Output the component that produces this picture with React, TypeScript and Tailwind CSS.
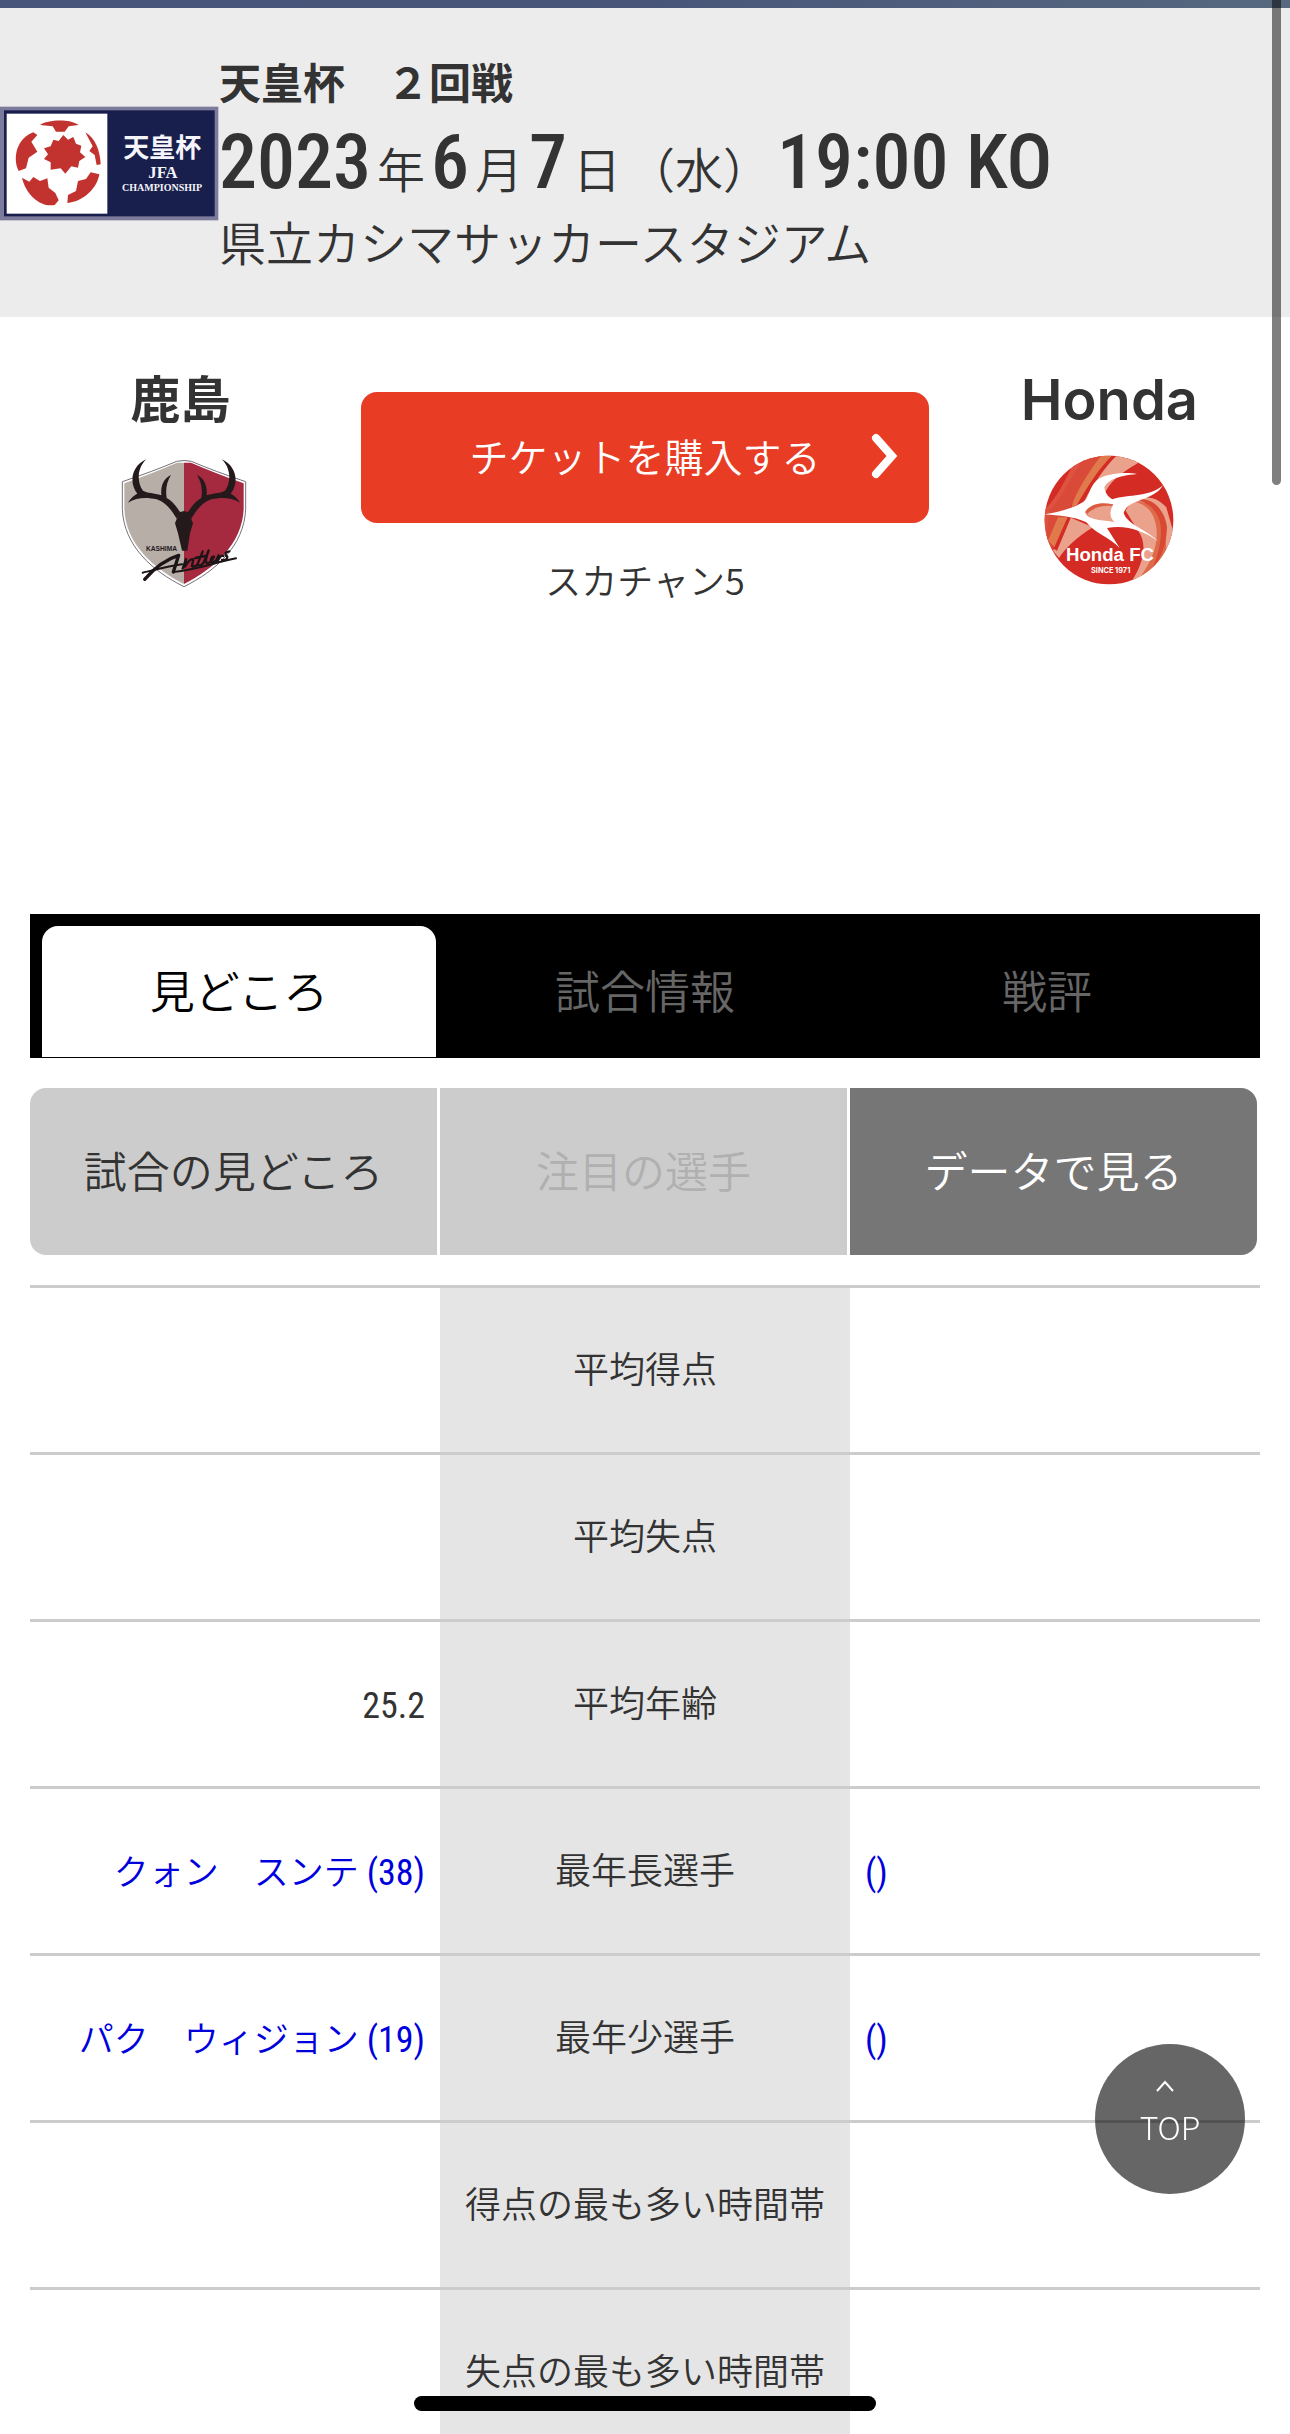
import type { ReactNode } from "react";

type Row = { label: string; home?: ReactNode; away?: ReactNode };

function Player({ name, age }: { name?: string; age?: string }) {
  return (
    <a href="#player" className="text-[#0000dc]">
      {name && <span className="mr-2 text-[35px] font-[350]">{name}</span>}
      <span className="font-['Roboto_Condensed','Roboto',sans-serif]">({age})</span>
    </a>
  );
}

const rows: Row[] = [
  { label: "平均得点" },
  { label: "平均失点" },
  {
    label: "平均年齢",
    home: <span className="font-['Roboto_Condensed','Roboto',sans-serif]">25.2</span>,
  },
  { label: "最年長選手", home: <Player name="クォン　スンテ" age="38" />, away: <Player age="" /> },
  { label: "最年少選手", home: <Player name="パク　ウィジョン" age="19" />, away: <Player age="" /> },
  { label: "得点の最も多い時間帯" },
  { label: "失点の最も多い時間帯" },
];

function CupLogo() {
  return (
    <svg viewBox="0 45 657 345" className="h-[115px] w-[219px] shrink-0" role="img" aria-label="天皇杯 JFA">
      <rect x="0" y="47" width="655" height="341" fill="#7d7b9b" />
      <rect x="12" y="58" width="632" height="318" fill="#191f4c" />
      <rect x="20" y="68" width="302" height="300" fill="#fff" />
      <g fill="#c2322e">
        <path d="M120 102C142 86 208 82 236 102L206 106L194 122H168L158 106Z" />
        <path d="M190 132L204 146L220 138L228 158L244 164L240 184L256 198L238 210L234 230L214 226L196 248L182 232L152 236L152 214L132 204L144 190L132 172L152 166L160 146L176 150Z" />
        <path d="M100 124L112 132L94 152L112 182L86 200L78 232L56 240C36 200 52 140 100 124Z" />
        <path d="M66 260L88 272L100 258L120 270L142 262L146 290L166 306L176 328L164 342C122 350 78 312 66 260Z" />
        <path d="M204 312L228 300L234 270L258 264L272 244L298 250C292 290 252 332 202 336Z" />
        <path d="M256 124C286 142 300 178 302 220L290 222L284 192L268 180L278 166Z" />
      </g>
      <g fill="#f4f4fa" textAnchor="middle">
        <text x="487" y="199" fontSize="78" fontWeight="700" fontFamily="Noto Sans CJK JP">天皇杯</text>
        <text x="489" y="262" fontSize="50" fontWeight="700" fontFamily="Liberation Serif">JFA</text>
        <text x="486" y="301" fontSize="30" fontWeight="700" fontFamily="Liberation Serif">CHAMPIONSHIP</text>
      </g>
    </svg>
  );
}

function AntlersLogo() {
  return (
    <svg viewBox="52 317 378 390" className="h-[130px] w-[126px] overflow-visible" role="img" aria-label="Kashima Antlers">
      <path d="M65 397Q160 365 228 336Q250 331 272 336Q340 365 435 397V480C430 590 345 665 250 712C155 665 70 590 65 480Z" fill="#fff" stroke="#77707a" strokeWidth="3" />
      <path d="M250 340H229Q160 370 71 402V480C76 585 158 657 250 704Z" fill="#b8aea8" />
      <path d="M250 340H271Q340 370 429 402V480C424 585 342 657 250 704Z" fill="#a52a3f" />
      <path d="M137 330C92 350 84 400 110 433C122 428 96 436 82 460C110 442 142 444 168 450C195 458 214 484 228 508L238 488C224 466 210 452 198 446C194 420 198 398 211 376C185 390 180 414 182 438C160 430 140 432 127 424C106 396 112 352 137 330Z" fill="#241a1b" />
      <path d="M363 330C408 350 416 400 390 433C378 428 404 436 418 460C390 442 358 444 332 450C305 458 286 484 272 508L262 488C276 466 290 452 302 446C306 420 302 398 289 376C315 390 320 414 318 438C340 430 360 432 373 424C394 396 388 352 363 330Z" fill="#241a1b" />
      <path d="M236 489L250 485L264 489L277 522L268 552L260 604H244L232 552L223 522Z" fill="#241a1b" />
      <text x="136" y="606" fontSize="20" fontWeight="700" fontFamily="Liberation Sans" fill="#241a1b">KASHIMA</text>
      <g fill="none" stroke="#1d1416" strokeLinecap="round" strokeLinejoin="round">
        <path d="M132 690C158 660 188 632 234 618L218 668" strokeWidth="10" />
        <path d="M126 670C168 660 208 650 244 645M218 668C290 662 340 640 406 627" strokeWidth="6" />
        <path d="M246 658L256 629L253 652Q268 626 278 630L274 650Q280 655 290 646L306 606M284 626L312 620M290 646Q300 652 308 642L324 603Q312 636 318 642Q330 642 340 622Q332 620 330 636Q338 642 346 634L354 618L350 638Q360 614 368 620M386 606Q366 610 380 622Q380 634 364 632" strokeWidth="7" />
      </g>
    </svg>
  );
}

function HondaLogo() {
  return (
    <svg viewBox="133 313 390 390" className="size-[130px]" role="img" aria-label="Honda FC">
      <defs>
        <clipPath id="disc"><circle cx="328" cy="508" r="193" /></clipPath>
      </defs>
      <g clipPath="url(#disc)">
        <rect x="130" y="310" width="400" height="400" fill="#d42b24" />
        <path d="M130 480C180 440 200 370 240 310H310C270 370 220 440 190 490L150 580H130Z" fill="#de5240" />
        <path d="M150 480C190 440 210 380 262 310H325C270 370 230 440 200 490L158 600L140 560Z" fill="#da4a38" />
        <path d="M215 470C230 420 270 360 308 310H345C300 360 262 420 240 460ZM175 500H205L165 590L145 570Z" fill="#e07a4c" />
        <path d="M240 460C275 400 310 350 352 314L420 334C360 370 330 390 310 440L250 480ZM210 500L280 530C230 560 195 595 178 622L160 600C175 570 195 530 210 500Z" fill="#eba28c" />
        <path d="M232 462C265 405 300 350 340 312H352C316 350 280 400 250 458ZM204 500H214L172 600L162 594Z" fill="#d42b24" />
        <path d="M256 484Q280 452 335 458L345 515Q280 520 256 484Z" fill="#eba28c" />
        <path d="M258 482Q285 450 325 452L338 466Q290 462 262 490Z" fill="#dc5c40" />
        <path d="M378 480C400 435 460 425 500 470L520 540C510 610 470 660 390 700C440 630 440 570 415 540Z" fill="#eba28c" />
        <path d="M400 452C440 450 480 470 496 520L500 600C475 650 440 680 410 696C450 640 478 590 470 530C462 480 440 462 400 452Z" fill="#dd6a4a" />
        <path d="M405 448C450 435 495 470 502 530C500 590 480 630 460 650C480 600 490 550 480 510C465 465 430 450 405 448Z" fill="#d84832" />
        <path d="M135 491C200 480 242 464 260 446C276 410 280 382 330 372C360 366 390 366 412 370C350 376 326 388 314 410C318 432 328 440 338 446C390 430 450 440 490 404C462 452 386 444 372 486C380 520 440 536 476 572C430 540 380 522 322 532L360 592C330 560 286 548 260 515C220 496 180 496 135 491ZM256 484C266 510 310 508 344 514C326 496 332 480 340 461C300 452 270 462 256 484Z" fillRule="evenodd" fill="#fff" />
      </g>
      <g fill="#fff" textAnchor="middle">
        <text x="331" y="630" fontSize="56" fontWeight="700" fontFamily="Liberation Sans">Honda FC</text>
        <text x="333" y="668" fontSize="22" fontWeight="700" fontFamily="Inter">SINCE 1971</text>
      </g>
    </svg>
  );
}

export default function App() {
  return (
    <div className="flex h-screen flex-col overflow-hidden bg-white font-['Noto_Sans_CJK_JP',sans-serif] text-[#333]">
      <div className="h-2 shrink-0 bg-linear-to-r from-[#47557a] via-[#485579] to-[#56697f]" />
      <header className="flex shrink-0 items-center bg-[#ececec] pt-[42px] pb-[41px]">
        <CupLogo />
        <div className="pb-[6px] whitespace-nowrap">
          <p className="text-[42px] leading-[62px] font-bold">天皇杯　２回戦</p>
          <p className="flex items-baseline gap-[6px] font-['Roboto_Condensed','Roboto',sans-serif] text-[76px] leading-[100px] font-medium">
            <span>2023</span>
            <span className="font-['Noto_Sans_CJK_JP',sans-serif] text-5xl font-[350]">年</span>
            <span>6</span>
            <span className="font-['Noto_Sans_CJK_JP',sans-serif] text-5xl font-[350]">月</span>
            <span>7</span>
            <span className="font-['Noto_Sans_CJK_JP',sans-serif] text-5xl font-[350]">日</span>
            <span className="font-['Noto_Sans_CJK_JP',sans-serif] text-5xl font-[350]">（水）</span>
            <span>19:00 KO</span>
          </p>
          <p className="text-[47px] leading-[58px] font-[350]">県立カシマサッカースタジアム</p>
        </div>
      </header>

      <section className="flex min-h-[597px] shrink-0 items-start pt-[53px]">
        <div className="flex w-[28%] flex-col items-center gap-[25px]">
          <h2 className="font-['Inter','Noto_Sans_CJK_JP',sans-serif] text-[50px] leading-[60px] font-bold">鹿島</h2>
          <AntlersLogo />
        </div>
        <div className="flex w-[44%] flex-col items-center pt-[22px]">
          <a href="#ticket" className="relative flex h-[131px] w-full items-center justify-center rounded-2xl bg-[#e83c25] pb-1 text-[39px] font-[350] text-white">
            チケットを購入する
            <svg viewBox="0 0 28 46" className="absolute right-[30px] h-[46px] w-7" fill="none" stroke="currentColor" strokeWidth="8" strokeLinecap="round" strokeLinejoin="miter" aria-hidden="true">
              <path d="M5 5L21 23L5 41" />
            </svg>
          </a>
          <p className="mt-8 text-4xl leading-[48px] font-[350]">スカチャン5</p>
        </div>
        <div className="flex w-[28%] flex-col items-center gap-[25px]">
          <h2 className="font-['Inter','Noto_Sans_CJK_JP',sans-serif] text-[56px] leading-[60px] font-semibold">Honda</h2>
          <HondaLogo />
        </div>
      </section>

      <main className="mx-[30px] shrink-0">
        <nav className="grid h-36 grid-cols-3 bg-black px-3 pt-3 text-[45px] font-[350]">
          <button className="mr-2 mb-px rounded-t-2xl bg-white pb-1 text-black">見どころ</button>
          <button className="pb-1 text-[#666]">試合情報</button>
          <button className="pb-1 text-[#666]">戦評</button>
        </nav>
        <div className="mt-[30px] mr-[3px] grid h-[167px] grid-cols-3 gap-[3px] overflow-hidden rounded-2xl text-[43px] font-[350]">
          <button className="bg-[#ccc] pb-1">試合の見どころ</button>
          <button disabled className="bg-[#ccc] pb-1 text-[#b0b0b0]">注目の選手</button>
          <button className="bg-[#767676] pb-1 text-white">データで見る</button>
        </div>
        <table className="mt-[30px] w-full table-fixed border-collapse border-t-[3px] border-[#ccc]">
          <tbody className="text-4xl whitespace-nowrap">
            {rows.map((r) => (
              <tr key={r.label} className="h-[167px] border-b-[3px] border-[#ccc]">
                <td className="px-[15px] text-right">{r.home}</td>
                <th scope="row" className="bg-[#e5e5e5] pb-1.5 font-[350]">{r.label}</th>
                <td className="px-[15px] text-left">{r.away}</td>
              </tr>
            ))}
          </tbody>
        </table>
      </main>

      <a href="#top" className="fixed right-[45px] bottom-60 flex size-[150px] flex-col items-center rounded-full bg-black/60 pt-9 text-white">
        <svg viewBox="0 0 18 12" className="mr-[10px] h-3 w-[18px]" fill="none" stroke="currentColor" strokeWidth="2" aria-hidden="true">
          <path d="M1 11L9 2L17 11" />
        </svg>
        <span className="mt-[14px] text-[32px] leading-[40px] font-light">TOP</span>
      </a>
      <div className="fixed top-0 right-[9px] h-[485px] w-[9px] rounded-b-full bg-black/50" />
      <div className="fixed bottom-[23px] left-1/2 h-[15px] w-[462px] -translate-x-1/2 rounded-full bg-black" />
    </div>
  );
}
